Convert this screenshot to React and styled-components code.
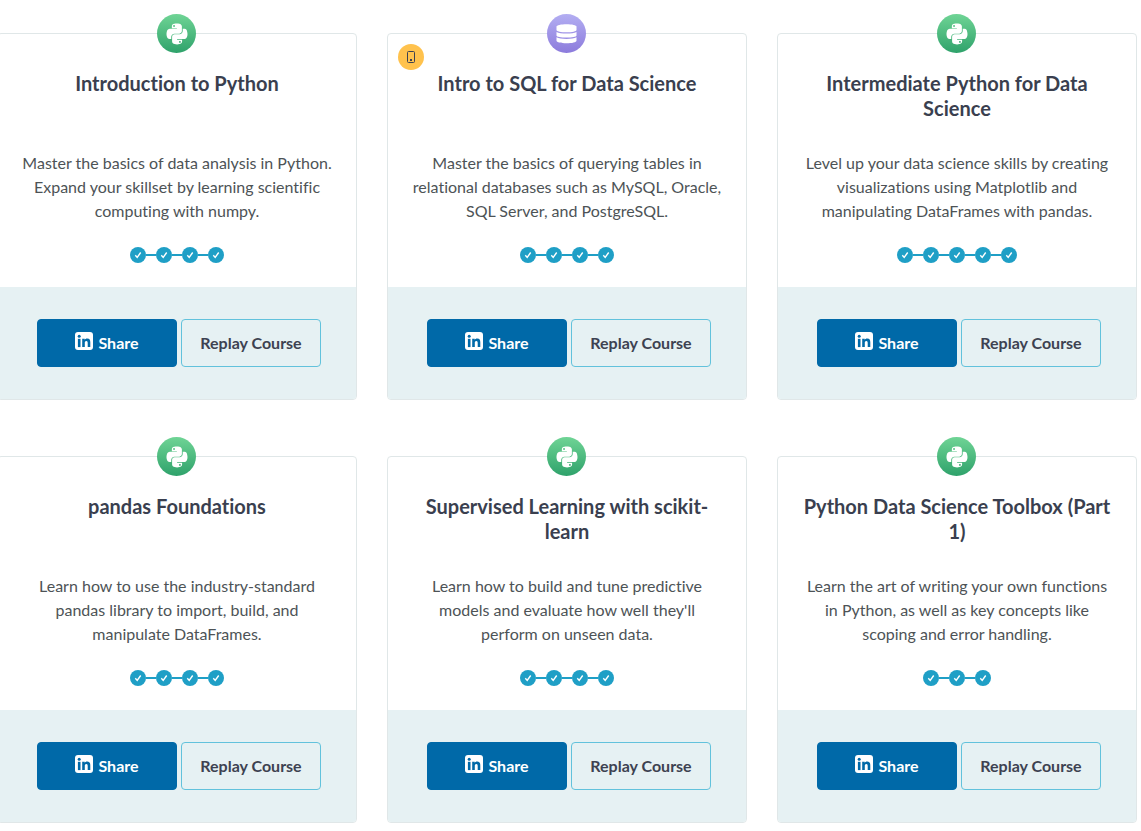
import React from 'react';
import styled, { createGlobalStyle } from 'styled-components';
import { FaPython } from 'react-icons/fa';

const GlobalStyle = createGlobalStyle`
  *, *::before, *::after { box-sizing: border-box; }
  body {
    margin: 0;
    background: #fff;
    color: #3d4251;
    font-family: Lato, "Liberation Sans", sans-serif;
    font-variant-ligatures: none;
    overflow-x: hidden;
  }
`;

const CourseGrid = styled.main`
  display: grid;
  grid-template-columns: repeat(3, minmax(0, 1fr));
  gap: 56px 30px;
  margin: 0 4px 0 -3px;
  padding: 33px 0 8px;
`;

const Card = styled.article`
  position: relative;
  display: flex;
  flex-direction: column;
  border: 1px solid #e0e7e8;
  border-radius: 4px;
  text-align: center;
`;

const TechBadge = styled.span`
  position: absolute;
  top: -20px;
  left: calc(50% - 20px);
  display: flex;
  align-items: center;
  justify-content: center;
  width: 39px;
  height: 39px;
  border-radius: 50%;
  color: #fff;
  background: ${({ $tech }) =>
    $tech === 'sql'
      ? 'linear-gradient(#b3aef2, #8c7bdc)'
      : 'linear-gradient(#6fd495, #2fa26b)'};
`;

const MobileBadge = styled.span`
  position: absolute;
  top: 10px;
  left: 10px;
  display: flex;
  align-items: center;
  justify-content: center;
  width: 26px;
  height: 26px;
  border-radius: 50%;
  background: #ffc24d;
`;

const CardBody = styled.div`
  flex: 1;
  display: flex;
  flex-direction: column;
  align-items: center;
  padding: 37px 24px 24px;
`;

const Title = styled.h2`
  min-height: 80px;
  margin: 0;
  font-size: 20px;
  line-height: 25px;
  font-weight: 700;
  color: #3a3f4f;
`;

const Description = styled.p`
  min-height: 72px;
  margin: 0 0 24px;
  font-size: 16px;
  line-height: 24px;
  color: #4d5356;
`;

const Chapters = styled.ol`
  display: flex;
  gap: 10px;
  margin: 0;
  padding: 0;
  list-style: none;
`;

const Chapter = styled.li`
  position: relative;
  display: flex;
  width: 16px;
  height: 16px;
  border-radius: 50%;
  background: #1f9fc6;

  & + &::before {
    content: '';
    position: absolute;
    top: 7px;
    right: 100%;
    width: 10px;
    height: 2px;
    background: #1f9fc6;
  }
`;

const CardFooter = styled.footer`
  display: flex;
  justify-content: center;
  padding: 32px 20px;
  background: #e6f1f3;
  border-radius: 0 0 3px 3px;
`;

const Button = styled.button`
  display: flex;
  align-items: center;
  justify-content: center;
  gap: 5px;
  width: 140px;
  height: 48px;
  margin: 0 0 0 4px;
  padding: 0 0 1px;
  border: 1px solid ${({ $primary }) => ($primary ? '#0069a8' : '#62c2dc')};
  border-radius: 4px;
  background: ${({ $primary }) => ($primary ? '#0069a8' : 'transparent')};
  color: ${({ $primary }) => ($primary ? '#fff' : '#3d4251')};
  font: 700 16px/24px Lato, "Liberation Sans", sans-serif;
  cursor: pointer;
`;

const LinkedInMark = styled.svg`
  margin-bottom: 3px;
`;

const DatabaseIcon = () => (
  <svg width="21" height="20" viewBox="0 0 21 20" fill="currentColor" aria-hidden="true">
    <path d="M.5 2.700C.5 1.200 5 .3 10.500 .3s10 .9 10 2.400v3.300c0 1.400-4.500 2.300-10 2.300S.5 7.400 .5 6z" />
    <path d="M.5 7.900c2 1.200 5.800 1.700 10 1.700s8-.5 10-1.700v3.500c0 1.400-4.500 2.200-10 2.200S.5 12.800.5 11.400z" />
    <path d="M.5 13.300c2 1.200 5.800 1.700 10 1.700s8-.5 10-1.700v3.500c0 1.600-4.500 2.500-10 2.500S.5 18.400.5 16.800z" />
  </svg>
);

const PhoneIcon = () => (
  <svg width="10" height="14" viewBox="0 0 10 14" fill="none" aria-hidden="true">
    <rect x="1.500" y="1.500" width="7" height="11" rx="1" stroke="#3d4251" />
    <rect x="4" y="9" width="2" height="2" fill="#3d4251" />
  </svg>
);

const CheckIcon = () => (
  <svg width="16" height="16" viewBox="0 0 16 16" fill="none" aria-hidden="true">
    <path d="M5.300 8.300l1.900 2.100 3.500-4.900" stroke="#fff" strokeWidth="1.400" />
  </svg>
);

const LinkedInIcon = () => (
  <LinkedInMark width="18" height="18" viewBox="0 0 18 18" aria-hidden="true">
    <rect width="18" height="18" rx="3" fill="#fff" />
    <g fill="#0069a8">
      <circle cx="4.200" cy="4.300" r="1.500" />
      <rect x="2.900" y="6.800" width="2.600" height="8.300" />
      <path d="M7.200 6.800h2.500v1.100c.4-.7 1.300-1.300 2.500-1.300 2.500 0 3.100 1.600 3.100 3.900v4.600h-2.600v-4c0-1.100-.1-2.200-1.400-2.200s-1.500 1-1.500 2.100v4.100H7.200z" />
    </g>
  </LinkedInMark>
);

const courses = [
  {
    title: 'Introduction to Python',
    text: 'Master the basics of data analysis in Python. Expand your skillset by learning scientific computing with numpy.',
    chapters: 4,
  },
  {
    title: 'Intro to SQL for Data Science',
    text: 'Master the basics of querying tables in relational databases such as MySQL, Oracle, SQL Server, and PostgreSQL.',
    chapters: 4,
    tech: 'sql',
    mobile: true,
  },
  {
    title: 'Intermediate Python for Data Science',
    text: 'Level up your data science skills by creating visualizations using Matplotlib and manipulating DataFrames with pandas.',
    chapters: 5,
  },
  {
    title: 'pandas Foundations',
    text: 'Learn how to use the industry-standard pandas library to import, build, and manipulate DataFrames.',
    chapters: 4,
  },
  {
    title: 'Supervised Learning with scikit-learn',
    text: "Learn how to build and tune predictive models and evaluate how well they'll perform on unseen data.",
    chapters: 4,
  },
  {
    title: 'Python Data Science Toolbox (Part 1)',
    text: 'Learn the art of writing your own functions in Python, as well as key concepts like scoping and error handling.',
    chapters: 3,
  },
];

const CourseCard = ({ title, text, chapters, tech = 'python', mobile }) => (
  <Card>
    <TechBadge $tech={tech}>
      {tech === 'sql' ? <DatabaseIcon /> : <FaPython size={24} aria-hidden="true" />}
    </TechBadge>
    {mobile && (
      <MobileBadge>
        <PhoneIcon />
      </MobileBadge>
    )}
    <CardBody>
      <Title>{title}</Title>
      <Description>{text}</Description>
      <Chapters>
        {Array.from({ length: chapters }, (_, i) => (
          <Chapter key={i}>
            <CheckIcon />
          </Chapter>
        ))}
      </Chapters>
    </CardBody>
    <CardFooter>
      <Button type="button" $primary>
        <LinkedInIcon />
        Share
      </Button>
      <Button type="button">Replay Course</Button>
    </CardFooter>
  </Card>
);

export default function App() {
  return (
    <>
      <GlobalStyle />
      <CourseGrid>
        {courses.map((course) => (
          <CourseCard key={course.title} {...course} />
        ))}
      </CourseGrid>
    </>
  );
}
